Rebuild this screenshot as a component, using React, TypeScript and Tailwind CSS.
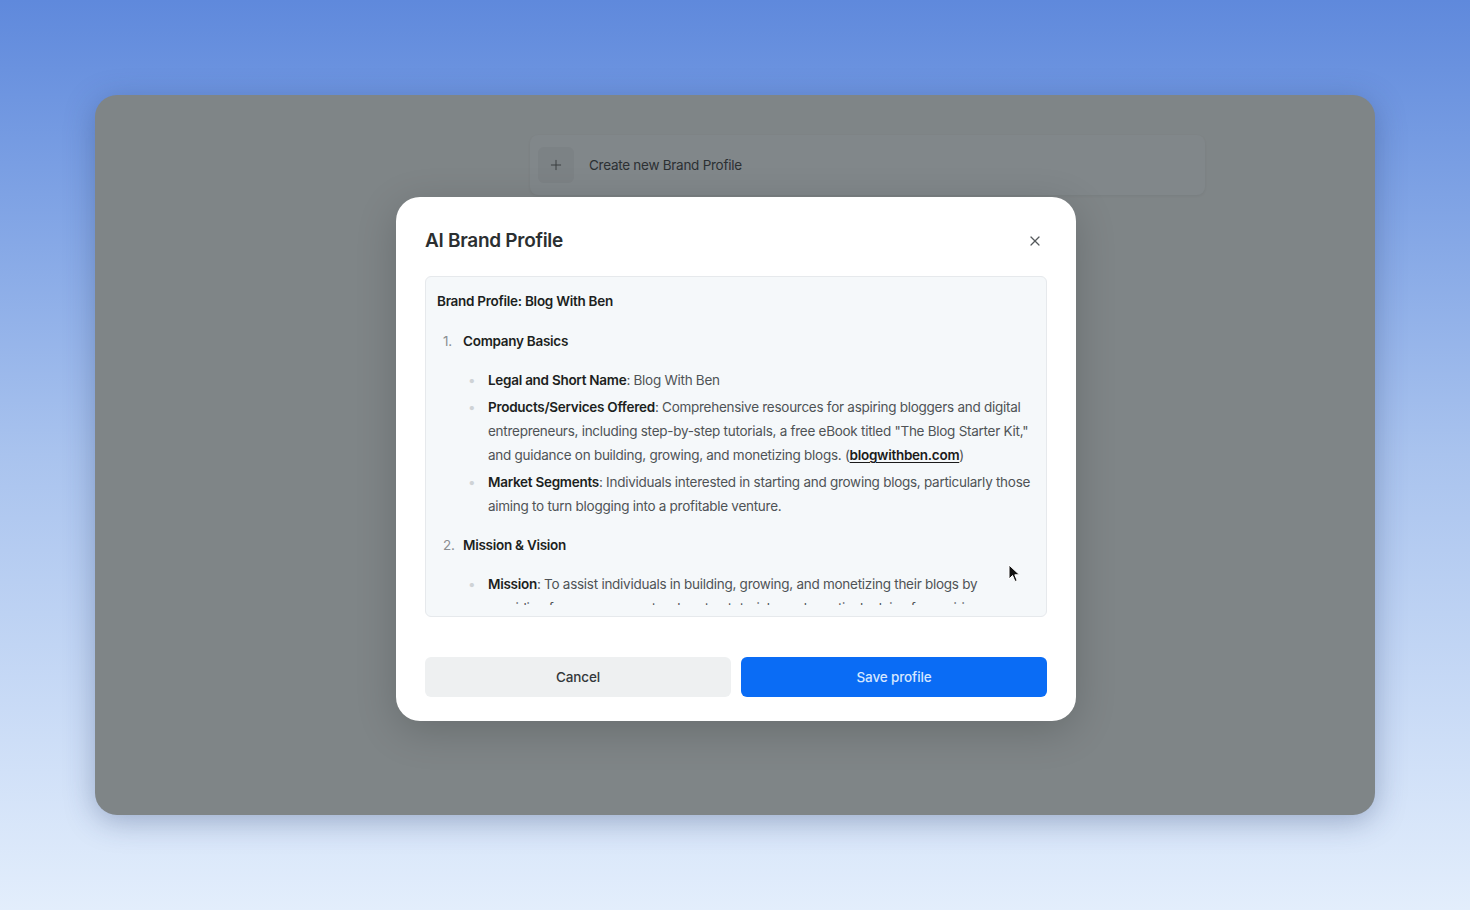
import { X, Plus } from 'lucide-react';

interface Detail {
  label: string;
  text: React.ReactNode;
}

interface Section {
  title: string;
  details: Detail[];
}

const sections: Section[] = [
  {
    title: 'Company Basics',
    details: [
      { label: 'Legal and Short Name', text: 'Blog With Ben' },
      {
        label: 'Products/Services Offered',
        text: (
          <>
            Comprehensive resources for aspiring bloggers and digital entrepreneurs, including step-by-step
            tutorials, a free eBook titled "The Blog Starter Kit," and guidance on building, growing, and
            monetizing blogs. (
            <a className="font-semibold text-[#1b1b1b] underline underline-offset-2">blogwithben.com</a>)
          </>
        ),
      },
      {
        label: 'Market Segments',
        text: 'Individuals interested in starting and growing blogs, particularly those aiming to turn blogging into a profitable venture.',
      },
    ],
  },
  {
    title: 'Mission & Vision',
    details: [
      {
        label: 'Mission',
        text: 'To assist individuals in building, growing, and monetizing their blogs by providing free resources, step-by-step tutorials, and practical advice for aspiring bloggers.',
      },
      {
        label: 'Vision',
        text: 'To become the go-to platform for bloggers looking to build sustainable online income.',
      },
    ],
  },
];

function Cursor() {
  return (
    <svg width="14" height="20" viewBox="0 0 14 20" className="absolute left-[1008px] top-[564px]">
      <path d="M1 1 L1 15 L4.5 11.5 L7 17.5 L9.2 16.6 L6.8 10.8 L11.5 10.8 Z" fill="#111" stroke="#fff" strokeWidth="1" />
    </svg>
  );
}

export default function App() {
  return (
    <div
      className="relative h-[910px] w-[1470px] overflow-hidden bg-gradient-to-b from-[#5f89dc] via-[#a9c3ee] to-[#e3eefc] p-[95px]"
      style={{ fontFamily: 'Inter, "Noto Sans", sans-serif' }}
    >
      {/* dimmed app window */}
      <div className="relative h-[720px] w-[1280px] rounded-[22px] bg-[#7f8587] pt-10 shadow-[0_6px_30px_rgba(40,60,110,0.35)]">
        <div className="ml-[435px] flex h-[60px] w-[675px] items-center gap-[15px] rounded-lg bg-[#81878a] px-2 shadow-[0_1px_3px_rgba(0,0,0,0.06)]">
          <div className="flex h-9 w-9 items-center justify-center rounded-md bg-[#7c8285]">
            <Plus className="h-4 w-4 text-[#3b3f41]" strokeWidth={1.5} />
          </div>
          <span className="text-[13.5px] tracking-[-0.02em] text-[#2c3033]">Create new Brand Profile</span>
        </div>

        {/* modal */}
        <div className="absolute left-[301px] top-[102px] w-[680px] rounded-[24px] bg-white px-[29px] pb-6 pt-[30px] shadow-[0_10px_40px_rgba(0,0,0,0.18)]">
          <div className="flex items-center justify-between">
            <h2 className="text-[19px] font-semibold leading-7 tracking-[-0.015em] text-[#2b2f31]">AI Brand Profile</h2>
            <X className="mr-1 h-4 w-4 text-[#55595c]" strokeWidth={1.8} />
          </div>

          <div className="mt-[21px] flex h-[341px] flex-col rounded-md border border-[#e6e9ec] bg-[#f5f8fa] pb-[11px] text-[13.5px] leading-6 tracking-[-0.02em] text-[#4f5356]">
            <div className="min-h-0 flex-1 overflow-hidden px-[11px] pt-[12px]">
              <p className="font-semibold text-[#1c1f21]">Brand Profile: Blog With Ben</p>
              <ol className="mt-4">
                {sections.map((s, i) => (
                  <li key={s.title} className="mb-[15px]">
                    <div className="flex">
                      <span className="w-[26px] pl-[6px] text-[#8a8e91]">{i + 1}.</span>
                      <span className="font-semibold text-[#1c1f21]">{s.title}</span>
                    </div>
                    <ul className="mt-[15px] flex flex-col gap-[3px]">
                      {s.details.map((d) => (
                        <li key={d.label} className="flex">
                          <span className="w-[51px] shrink-0 pl-[31px] text-[#cfd3d6]">•</span>
                          <span>
                            <span className="font-semibold text-[#1c1f21]">{d.label}</span>: {d.text}
                          </span>
                        </li>
                      ))}
                    </ul>
                  </li>
                ))}
              </ol>
            </div>
          </div>

          <div className="mt-10 flex gap-[10px]">
            <button className="h-10 flex-1 rounded-md bg-[#eef0f1] text-[13.5px] font-medium tracking-[-0.01em] text-[#34383b]">Cancel</button>
            <button className="h-10 flex-1 rounded-md bg-[#0a6cf5] text-[13.5px] font-medium tracking-[-0.01em] text-[#d6e7ff]">Save profile</button>
          </div>
        </div>
      </div>
      <Cursor />
    </div>
  );
}
